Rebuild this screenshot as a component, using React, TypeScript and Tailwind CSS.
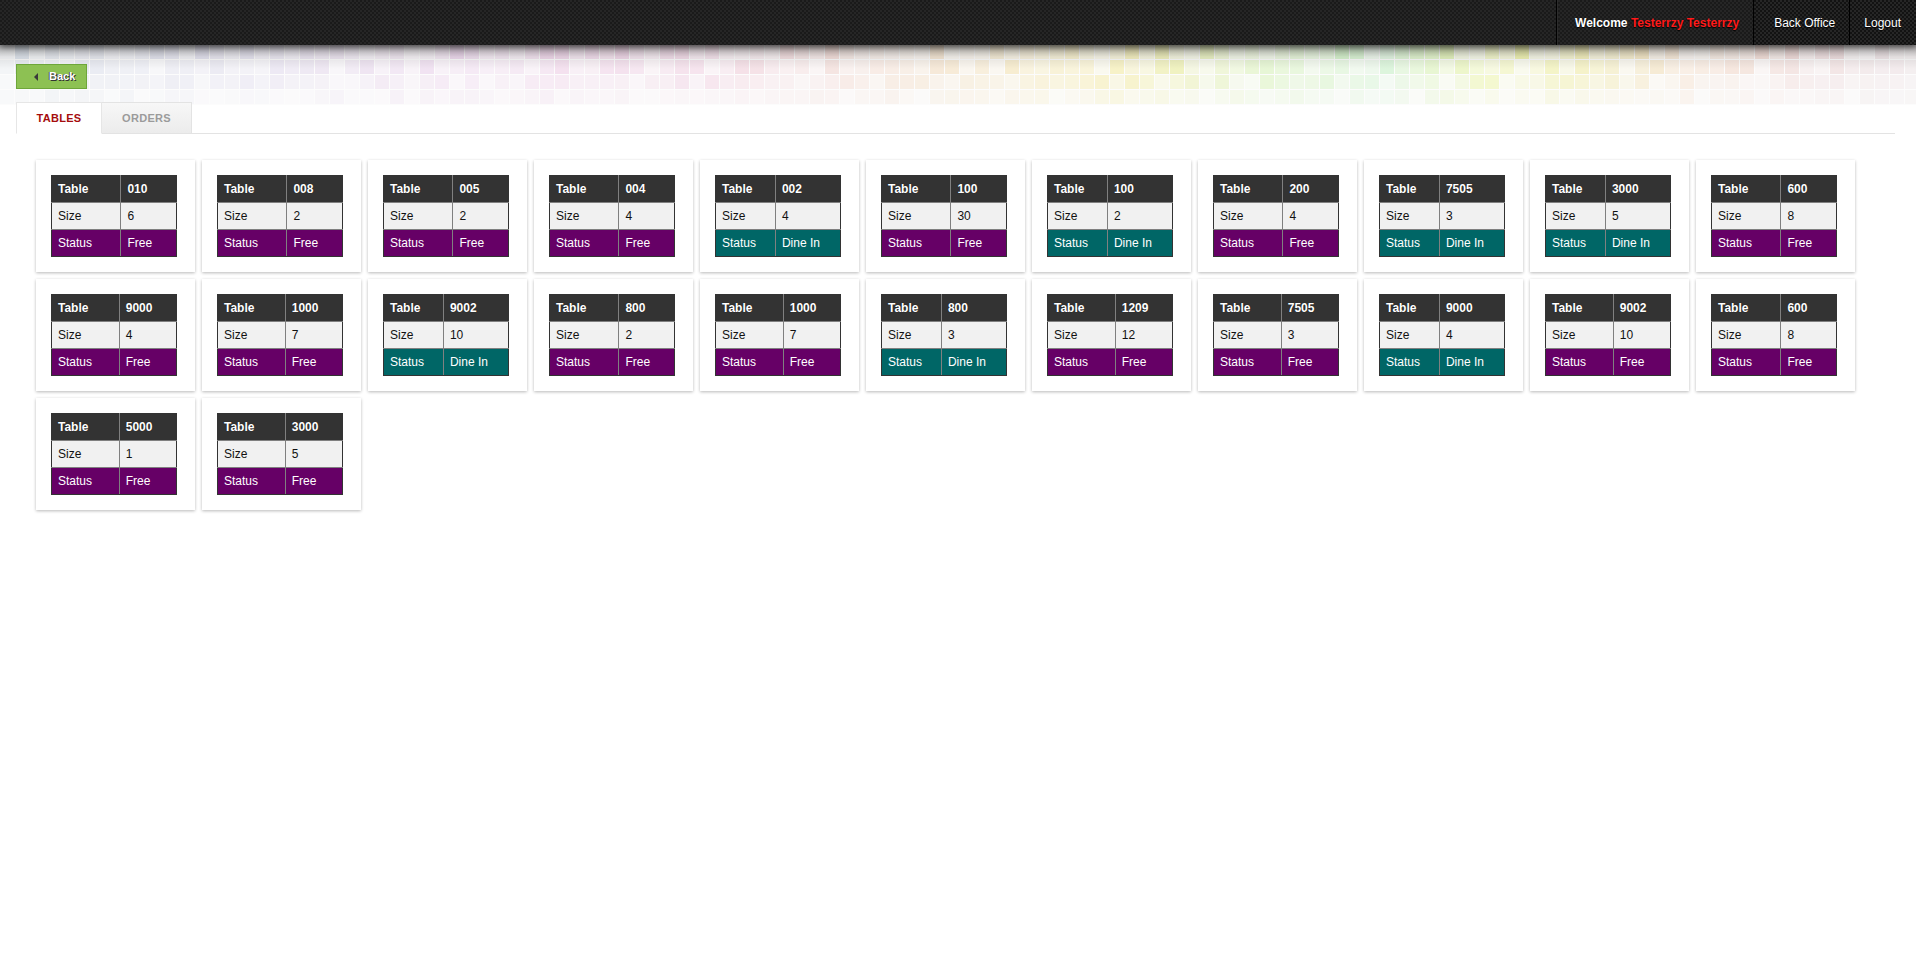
import React from "react";

type Row = { t: string; s: string; st: "Free" | "Dine In" };

const tables: Row[] = [
  { t: "010", s: "6", st: "Free" },
  { t: "008", s: "2", st: "Free" },
  { t: "005", s: "2", st: "Free" },
  { t: "004", s: "4", st: "Free" },
  { t: "002", s: "4", st: "Dine In" },
  { t: "100", s: "30", st: "Free" },
  { t: "100", s: "2", st: "Dine In" },
  { t: "200", s: "4", st: "Free" },
  { t: "7505", s: "3", st: "Dine In" },
  { t: "3000", s: "5", st: "Dine In" },
  { t: "600", s: "8", st: "Free" },
  { t: "9000", s: "4", st: "Free" },
  { t: "1000", s: "7", st: "Free" },
  { t: "9002", s: "10", st: "Dine In" },
  { t: "800", s: "2", st: "Free" },
  { t: "1000", s: "7", st: "Free" },
  { t: "800", s: "3", st: "Dine In" },
  { t: "1209", s: "12", st: "Free" },
  { t: "7505", s: "3", st: "Free" },
  { t: "9000", s: "4", st: "Dine In" },
  { t: "9002", s: "10", st: "Free" },
  { t: "600", s: "8", st: "Free" },
  { t: "5000", s: "1", st: "Free" },
  { t: "3000", s: "5", st: "Free" },
];

const stops: [number, [number, number, number]][] = [
  [0, [205, 215, 228]],
  [250, [220, 215, 235]],
  [450, [232, 200, 232]],
  [700, [238, 195, 218]],
  [880, [240, 210, 190]],
  [1000, [242, 222, 170]],
  [1120, [240, 228, 120]],
  [1250, [205, 238, 160]],
  [1380, [190, 238, 190]],
  [1480, [230, 240, 130]],
  [1580, [238, 232, 150]],
  [1680, [242, 212, 185]],
  [1800, [235, 205, 205]],
  [1916, [228, 215, 220]],
];

function colorAt(x: number): string {
  for (let i = 0; i < stops.length - 1; i++) {
    const [x0, c0] = stops[i];
    const [x1, c1] = stops[i + 1];
    if (x >= x0 && x <= x1) {
      const f = (x - x0) / (x1 - x0);
      const c = c0.map((v, k) => Math.round(v + (c1[k] - v) * f));
      return `rgb(${c[0]},${c[1]},${c[2]})`;
    }
  }
  return "rgb(230,230,230)";
}

function rnd(i: number, j: number): number {
  const v = Math.sin(i * 12.9898 + j * 78.233) * 43758.5453;
  return v - Math.floor(v);
}

function Mosaic() {
  const cols = Math.ceil(1916 / 15);
  const rowAlpha = [0.65, 0.52, 0.38, 0.2];
  const rects: React.ReactNode[] = [];
  for (let j = 0; j < 4; j++) {
    for (let i = 0; i < cols; i++) {
      const r = rnd(i, j);
      const a = (0.2 + 0.8 * r) * rowAlpha[j];
      rects.push(
        <rect
          key={`${i}-${j}`}
          x={i * 15}
          y={j * 15}
          width={14}
          height={14}
          fill={colorAt(i * 15)}
          fillOpacity={a}
        />
      );
    }
  }
  return (
    <svg
      className="absolute left-0 top-0 pointer-events-none"
      width={1916}
      height={60}
      viewBox="0 0 1916 60"
    >
      <defs>
        <linearGradient id="fadeTop" x1="0" y1="0" x2="0" y2="1">
          <stop offset="0" stopColor="#000" stopOpacity="0.35" />
          <stop offset="0.2" stopColor="#000" stopOpacity="0.08" />
          <stop offset="0.4" stopColor="#000" stopOpacity="0" />
        </linearGradient>
      </defs>
      <rect x={0} y={0} width={1916} height={60} fill="#fafafa" fillOpacity={0.6} />
      {rects}
      <rect x={0} y={0} width={1916} height={60} fill="url(#fadeTop)" />
    </svg>
  );
}

function TableCard({ row }: { row: Row }) {
  const statusBg = row.st === "Free" ? "bg-[#660066]" : "bg-[#006666]";
  return (
    <div className="w-[159px] h-[112px] bg-white p-[15px] shadow-[0_1px_3px_rgba(0,0,0,0.28)]">
      <table className="w-[126px] border-collapse border border-[#333] text-[12px] leading-[14px]">
        <tbody>
          <tr className="bg-[#333333] text-white font-bold [text-shadow:0_0_1px_rgba(0,0,0,0.6)]">
            <td className="border border-[#808080] border-t-[#333] border-l-[#333] px-[6px] py-[6px]">Table</td>
            <td className="border border-[#808080] border-t-[#333] border-r-[#333] px-[6px] py-[6px]">{row.t}</td>
          </tr>
          <tr className="bg-[#f1f1f1] text-[#111]">
            <td className="border border-[#808080] border-l-[#333] px-[6px] py-[6px]">Size</td>
            <td className="border border-[#808080] border-r-[#333] px-[6px] py-[6px]">{row.s}</td>
          </tr>
          <tr className={`${statusBg} text-white`}>
            <td className="border border-[#808080] border-b-[#333] border-l-[#333] px-[6px] py-[6px]">Status</td>
            <td className="border border-[#808080] border-b-[#333] border-r-[#333] px-[6px] py-[6px]">{row.st}</td>
          </tr>
        </tbody>
      </table>
    </div>
  );
}

const carbon =
  "bg-[image:linear-gradient(45deg,#262626_25%,transparent_25%,transparent_75%,#262626_75%),linear-gradient(45deg,#262626_25%,transparent_25%,transparent_75%,#262626_75%)] bg-[length:4px_4px] bg-[position:0_0,2px_2px]";

export default function App() {
  return (
    <div className="min-h-[969px] bg-white font-['Liberation_Sans',Arial,sans-serif]">
      <header
        className={`relative z-20 h-[45px] flex justify-end bg-[#1a1a1a] ${carbon} shadow-[0_2px_6px_rgba(0,0,0,0.55)]`}
      >
        <div className="flex items-center h-full border-l border-black shadow-[inset_1px_0_0_#2c2c2c] pl-[18px] pr-[14px] text-[12px] font-bold text-white [text-shadow:0_1px_1px_#000]">
          <span>Welcome&nbsp;</span>
          <span className="text-[#ff1a1a]">Testerrzy Testerrzy</span>
        </div>
        <div
          className={`flex items-center h-full border-l border-black bg-[#121212] ${carbon} pl-[20px] pr-[14px] text-[12px] text-white [text-shadow:0_1px_1px_#000]`}
        >
          Back Office
        </div>
        <div
          className={`flex items-center h-full border-l border-black bg-[#121212] ${carbon} pl-[14px] pr-[15px] text-[12px] text-white [text-shadow:0_1px_1px_#000]`}
        >
          Logout
        </div>
      </header>

      <main className="relative">
        <Mosaic />
        <div className="relative z-10 pl-[16px] pr-[21px] pt-[19px]">
          <button className="flex items-center w-[71px] h-[25px] bg-[#8dc153] border border-[#6ea63a] pl-[17px] text-[11px] font-bold text-white [text-shadow:1px_1px_0_#333,-1px_0_0_#555]">
            <span className="w-0 h-0 border-y-[4px] border-y-transparent border-r-[4px] border-r-[#3a3a3a] mr-[11px]" />
            Back
          </button>

          <div className="mt-[13px] flex h-[32px] border-b border-[#e3e3e3]">
            <div className="flex items-center justify-center w-[86px] h-[32px] bg-white border border-[#e6e6e6] border-b-white text-[11px] font-bold text-[#a50d0d] tracking-[0.3px]">
              TABLES
            </div>
            <div className="flex items-center justify-center w-[90px] h-[31px] bg-[linear-gradient(#f7f7f7,#ececec)] border border-[#e3e3e3] border-b-0 border-l-0 text-[11px] font-bold text-[#9b9b9b] tracking-[0.3px]">
              ORDERS
            </div>
          </div>

          <div className="pl-[20px] pt-[26px] flex flex-wrap gap-[7px]">
            {tables.map((r, i) => (
              <TableCard key={i} row={r} />
            ))}
          </div>
        </div>
      </main>
    </div>
  );
}
